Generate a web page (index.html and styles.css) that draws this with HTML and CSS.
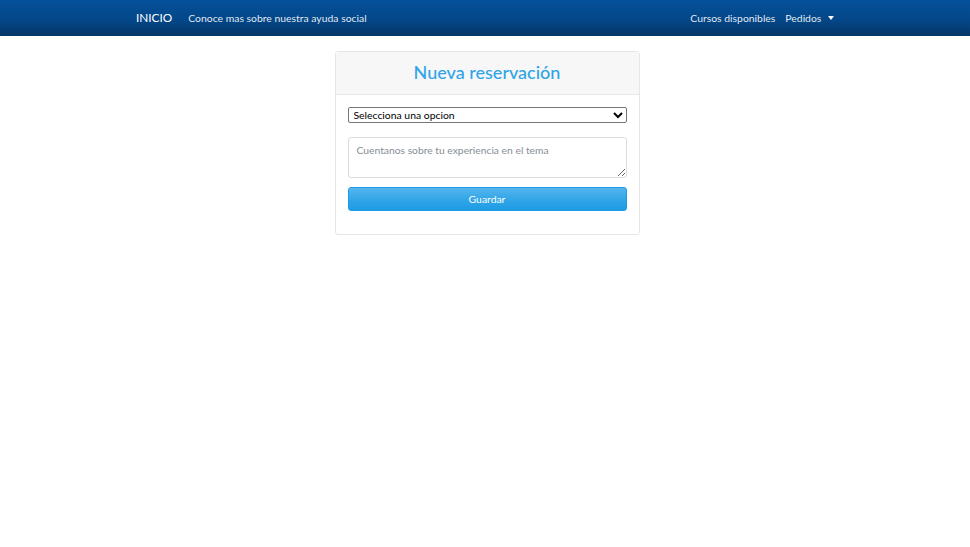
FILE: index.html
```html
<!DOCTYPE html>
<html lang="es">
<head>
<meta charset="utf-8">
<title>Nueva reservación</title>
<link rel="stylesheet" href="styles.css">
</head>
<body>
<nav class="navbar">
  <div class="nav-inner">
    <div class="nav-left">
      <a class="brand" href="#">INICIO</a>
      <a class="nav-link" href="#">Conoce mas sobre nuestra ayuda social</a>
    </div>
    <div class="nav-right">
      <a class="nav-link" href="#">Cursos disponibles</a>
      <a class="nav-link dropdown" href="#">Pedidos <span class="caret"></span></a>
    </div>
  </div>
</nav>
<main class="page">
  <div class="card">
    <div class="card-header">
      <h3 class="title">Nueva reservación</h3>
    </div>
    <form class="card-body">
      <select class="select">
        <option>Selecciona una opcion</option>
      </select>
      <textarea class="textarea" placeholder="Cuentanos sobre tu experiencia en el tema"></textarea>
      <button type="button" class="btn">Guardar</button>
    </form>
  </div>
</main>
</body>
</html>
```
FILE: styles.css
```css
* { box-sizing: border-box; }
html, body { margin: 0; padding: 0; background: #fff; }
body {
  font-family: Lato, "Open Sans", sans-serif;
  font-size: 10.3px;
  color: #495057;
}
.navbar {
  height: 36px;
  background: linear-gradient(#04519b, #044687 60%, #033769);
  border-bottom: 1px solid #033769;
}
.nav-inner {
  width: 720px;
  margin: 0 auto;
  padding: 0 11px;
  height: 100%;
  display: flex;
  align-items: center;
  justify-content: space-between;
}
.nav-left, .nav-right { display: flex; align-items: center; }
.brand {
  color: #fff;
  text-decoration: none;
  font-size: 11.8px;
  margin-right: 11px;
}
.nav-link {
  color: rgba(255,255,255,0.9);
  text-decoration: none;
  font-size: 10.4px;
  padding: 0 5px;
}
.nav-right .nav-link:last-child { padding-right: 0; }
.caret {
  display: inline-block;
  width: 0; height: 0;
  margin-left: 4px;
  vertical-align: 2px;
  border-top: 4px solid #fff;
  border-left: 3.5px solid transparent;
  border-right: 3.5px solid transparent;
}
.page {
  display: flex;
  justify-content: center;
  padding: 15px 0 0 4px;
}
.card {
  width: 305px;
  border: 1px solid #e6e6e6;
  border-radius: 3px;
  background: #fff;
}
.card-header {
  height: 43px;
  background: #f7f7f7;
  border-bottom: 1px solid #e6e6e6;
  display: flex;
  align-items: center;
  justify-content: center;
}
.title {
  margin: 0 0 2px;
  font-size: 18px;
  font-weight: 500;
  color: #2fa4e7;
}
.card-body {
  padding: 12px 12px 23px;
  display: flex;
  flex-direction: column;
}
.select {
  height: 16px;
  font-family: inherit;
  font-size: 10.4px;
  color: #000;
  border: 1px solid #767676;
  border-radius: 2px;
  padding: 0 1px;
  background: #fff;
}
.textarea {
  margin-top: 14px;
  height: 41px;
  border: 1px solid #dcdcdc;
  border-radius: 3px;
  padding: 6px 8px;
  font-family: inherit;
  font-size: 10.3px;
  color: #495057;
  resize: vertical;
}
.textarea::placeholder { color: #868e96; }
.btn {
  margin-top: 9px;
  height: 24px;
  border: 1px solid #1d9ce5;
  border-radius: 3px;
  background: linear-gradient(#54b4eb, #2fa4e7 60%, #1d9ce5);
  color: #fff;
  font-family: inherit;
  font-size: 10.4px;
  cursor: pointer;
}
```
